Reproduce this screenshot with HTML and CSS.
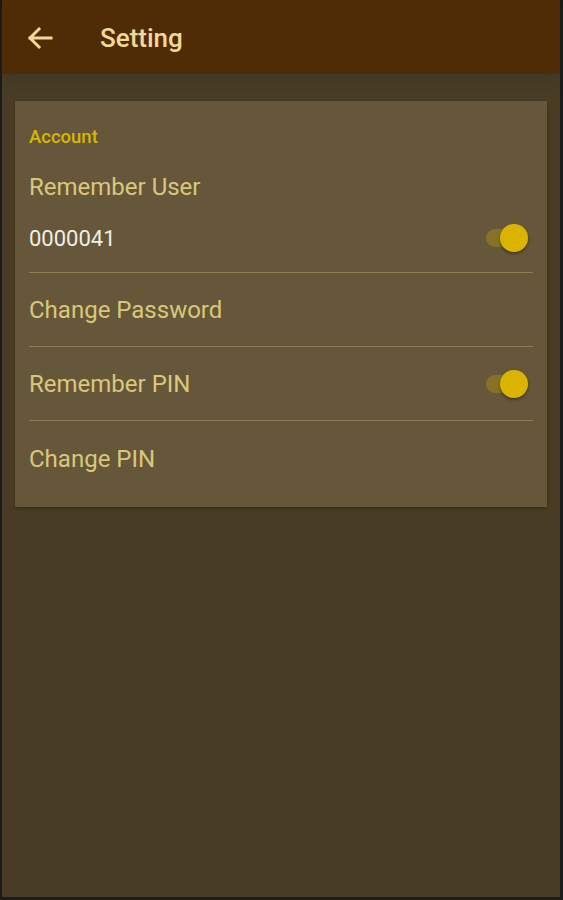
FILE: index.html
```html
<!DOCTYPE html>
<html lang="en">

<head>
    <meta charset="UTF-8">
    <meta name="viewport" content="width=device-width, initial-scale=1.0">
    <title>Setting</title>
    <link rel="stylesheet" href="styles.css">
</head>

<body>
    <div class="screen">
        <div class="toolbar">
            <svg class="backIcon" width="26" height="24" viewBox="0 0 26 24">
                <path d="M24 12H3M12 3L3 12L12 21" fill="none" stroke="#f2d996" stroke-width="3" stroke-linecap="square" />
            </svg>
            <div class="title">Setting</div>
        </div>
        <div class="content">
            <div class="card">
                <div class="category">Account</div>
                <div class="prefUser">
                    <div class="prefTitle">Remember User</div>
                    <div class="summaryRow">
                        <span class="summary">0000041</span>
                        <span class="switch"><span class="track"></span><span class="thumb"></span></span>
                    </div>
                </div>
                <div class="divider"></div>
                <div class="pref">
                    <span class="prefTitle">Change Password</span>
                </div>
                <div class="divider"></div>
                <div class="pref">
                    <span class="prefTitle">Remember PIN</span>
                    <span class="switch"><span class="track"></span><span class="thumb"></span></span>
                </div>
                <div class="divider"></div>
                <div class="pref last">
                    <span class="prefTitle">Change PIN</span>
                </div>
            </div>
        </div>
    </div>
</body>

</html>
```

FILE: styles.css
```css
* {
    box-sizing: border-box;
}

body {
    margin: 0;
    background-color: #1b1b1b;
    font-family: Roboto, "Liberation Sans", sans-serif;
}

.screen {
    display: flex;
    flex-direction: column;
    margin: 0 3px 3px 2px;
    height: 897px;
    background-color: #483c24;
}

/* 顶部栏 */
.toolbar {
    display: flex;
    align-items: center;
    position: relative;
    z-index: 1;
    height: 74px;
    padding: 2px 0 0 25px;
    background-color: #502c06;
    box-shadow: 0 4px 14px rgba(40, 40, 40, 0.3);
}

.backIcon {
    display: block;
}

.title {
    margin-left: 47px;
    font-size: 26px;
    font-weight: 500;
    color: #f2d996;
}

.content {
    flex: 1;
    padding: 27px 13px 0 13px;
}

/* 设置卡片 */
.card {
    padding: 0 14px 10px 14px;
    background-color: #66573a;
    box-shadow: 0 1px 3px rgba(0, 0, 0, 0.3);
}

.category {
    padding-top: 24px;
    line-height: 24px;
    font-size: 18.5px;
    font-weight: 500;
    color: #d6b800;
}

.prefUser {
    padding: 23px 0 19px 0;
}

.prefTitle {
    line-height: 30px;
    font-size: 24px;
    color: #d9c87a;
}

.summaryRow {
    display: flex;
    align-items: center;
    justify-content: space-between;
    height: 30px;
    margin-top: 21px;
}

.summary {
    font-size: 22px;
    color: #f1eee4;
}

.divider {
    height: 1px;
    background-color: #8e7e54;
}

.pref {
    display: flex;
    align-items: center;
    justify-content: space-between;
    height: 73px;
}

.pref.last {
    height: 76px;
}

/* 开关 */
.switch {
    position: relative;
    width: 42px;
    height: 28px;
    margin-right: 5px;
}

.track {
    position: absolute;
    left: 0;
    top: 5px;
    width: 36px;
    height: 18px;
    border-radius: 9px;
    background-color: #857226;
}

.thumb {
    position: absolute;
    right: 0;
    top: 0;
    width: 28px;
    height: 28px;
    border-radius: 50%;
    background-color: #dbb400;
    box-shadow: 0 2px 3px rgba(0, 0, 0, 0.35);
}
```
